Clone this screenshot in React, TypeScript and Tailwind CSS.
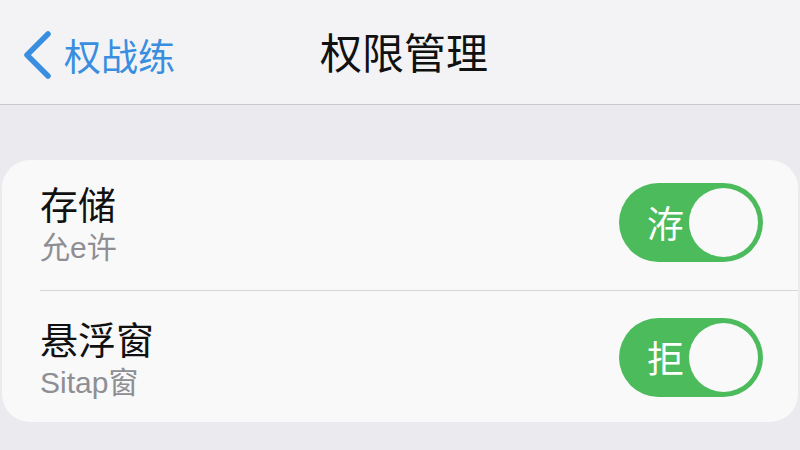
import React from "react";

const font = { fontFamily: '"Noto Sans CJK SC", "Noto Sans", sans-serif' };
const subFont = { fontFamily: '"Liberation Sans", "Noto Sans CJK SC", sans-serif' };

type Row = {
  title: string;
  subtitle: string;
  badge: string;
  rowClass: string;
};

const rows: Row[] = [
  { title: "存储", subtitle: "允e许", badge: "洊", rowClass: "h-[130px] pb-[6px]" },
  { title: "悬浮窗", subtitle: "Sitap窗", badge: "拒", rowClass: "h-[131px] pt-[2px]" },
];

const Toggle = ({ label }: { label: string }) => (
  <div className="w-[144px] h-[79px] rounded-full bg-[#4cbb5c] flex items-center justify-between pl-[28px] pr-[5px]">
    <span className="text-white text-[37px] leading-none">{label}</span>
    <div className="w-[69px] h-[69px] rounded-full bg-[#f9f9f9]" />
  </div>
);

export default function App() {
  return (
    <div className="w-[800px] h-[450px] bg-[#ebebef] overflow-hidden" style={font}>
      {/* Nav bar */}
      <div className="h-[105px] bg-[#f3f3f5] border-b border-[#c9c9cd] flex items-center relative">
        <div className="flex items-center pl-[22px] gap-[12px] pt-[6px]">
          <svg width="30" height="50" viewBox="0 0 30 50">
            <path
              d="M26 4 L5 25 L26 46"
              fill="none"
              stroke="#3a8ee0"
              strokeWidth="5.5"
              strokeLinecap="round"
              strokeLinejoin="round"
            />
          </svg>
          <span className="text-[#3a8ee0] text-[37px] leading-none">权战练</span>
        </div>
        <div className="absolute inset-x-0 top-[30px] text-center text-[42px] leading-none text-[#111] pointer-events-none">
          <span className="ml-[8px]">权限管理</span>
        </div>
      </div>

      {/* Settings card */}
      <div className="mt-[55px] mx-[2px] rounded-[28px] bg-[#f9f9f9] overflow-hidden">
        {rows.map((row, i) => (
          <div key={row.title}>
            {i > 0 && <div className="ml-[38px] h-px bg-[#d6d6d8]" />}
            <div className={`${row.rowClass} flex items-center justify-between pl-[38px] pr-[35px]`}>
              <div className="flex flex-col">
                <span className="text-[38px] leading-[44px] text-[#111]">{row.title}</span>
                <span className="mt-[7px] text-[30px] leading-[32px] text-[#8e8e93]" style={subFont}>
                  {row.subtitle}
                </span>
              </div>
              <Toggle label={row.badge} />
            </div>
          </div>
        ))}
      </div>
    </div>
  );
}
